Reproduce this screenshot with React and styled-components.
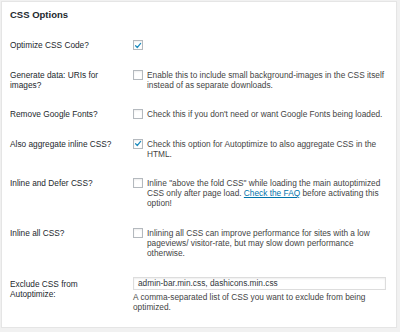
import React from "react";
import styled, { createGlobalStyle } from "styled-components";

const GlobalStyle = createGlobalStyle`
  html, body {
    margin: 0;
    padding: 0;
    background: #f1f1f1;
  }
  body {
    padding: 1px 0 0 1px;
    font-family: "Liberation Sans", Arial, sans-serif;
    -webkit-font-smoothing: antialiased;
  }
`;

const Panel = styled.div`
  width: 396px;
  height: 327px;
  box-sizing: border-box;
  background: #fff;
  border: 1px solid #e5e5e5;
  box-shadow: 0 1px 1px rgba(0, 0, 0, 0.04);
  padding: 7px 10px 4px 8px;
  color: #32373c;
  font-size: 8.3px;
  line-height: 10px;
`;

const Title = styled.h2`
  margin: 0 0 9px;
  font-size: 9.5px;
  line-height: 12px;
  font-weight: 700;
  color: #23282d;
`;

const Row = styled.div`
  display: grid;
  grid-template-columns: 123px 1fr;
  padding: 10px 0 9.5px;
`;

const Label = styled.div`
  color: #23282d;
  padding-right: 10px;
  padding-top: ${(p) => (p.$withInput ? "1.5px" : "0")};
`;

const Field = styled.label`
  display: flex;
  gap: 4px;
  align-items: flex-start;
`;

const Box = styled.span`
  flex: none;
  width: 10px;
  height: 10px;
  box-sizing: border-box;
  border: 1px solid #b4b9be;
  background: #fff;
  box-shadow: inset 0 1px 2px rgba(0, 0, 0, 0.07);
  display: flex;
  align-items: center;
  justify-content: center;
`;

const Text = styled.span`
  color: #444;
`;

const Link = styled.a`
  color: #0073aa;
  text-decoration: underline;
`;

const Input = styled.div`
  height: 13px;
  box-sizing: border-box;
  border: 1px solid #ddd;
  box-shadow: inset 0 1px 2px rgba(0, 0, 0, 0.07);
  padding: 0 4px;
  line-height: 11px;
  color: #32373c;
`;

const Help = styled.p`
  margin: 2px 0 0;
  color: #444;
  max-width: 245px;
`;

function Checkbox({ checked }) {
  return (
    <Box>
      {checked && (
        <svg width="9" height="9" viewBox="0 0 10 10">
          <path
            d="M2 5.3 L4.1 7.5 L8.3 2.4"
            fill="none"
            stroke="#1e8cbe"
            strokeWidth="1.5"
            strokeLinecap="round"
            strokeLinejoin="round"
          />
        </svg>
      )}
    </Box>
  );
}

function Option({ label, checked, children }) {
  return (
    <Row>
      <Label>{label}</Label>
      <Field>
        <Checkbox checked={checked} />
        {children && <Text>{children}</Text>}
      </Field>
    </Row>
  );
}

export default function App() {
  return (
    <>
      <GlobalStyle />
      <Panel>
        <Title>CSS Options</Title>
        <Option label="Optimize CSS Code?" checked />
        <Option label="Generate data: URIs for images?">
          Enable this to include small background-images in the CSS itself
          instead of as separate downloads.
        </Option>
        <Option label="Remove Google Fonts?">
          Check this if you don't need or want Google Fonts being loaded.
        </Option>
        <Option label="Also aggregate inline CSS?" checked>
          Check this option for Autoptimize to also aggregate CSS in the HTML.
        </Option>
        <Option label="Inline and Defer CSS?">
          Inline "above the fold CSS" while loading the main autoptimized CSS
          only after page load. <Link href="#">Check the FAQ</Link> before
          activating this option!
        </Option>
        <Option label="Inline all CSS?">
          Inlining all CSS can improve performance for sites with a low
          pageviews/ visitor-rate, but may slow down performance otherwise.
        </Option>
        <Row>
          <Label $withInput>Exclude CSS from Autoptimize:</Label>
          <div>
            <Input>admin-bar.min.css, dashicons.min.css</Input>
            <Help>
              A comma-separated list of CSS you want to exclude from being
              optimized.
            </Help>
          </div>
        </Row>
      </Panel>
    </>
  );
}
